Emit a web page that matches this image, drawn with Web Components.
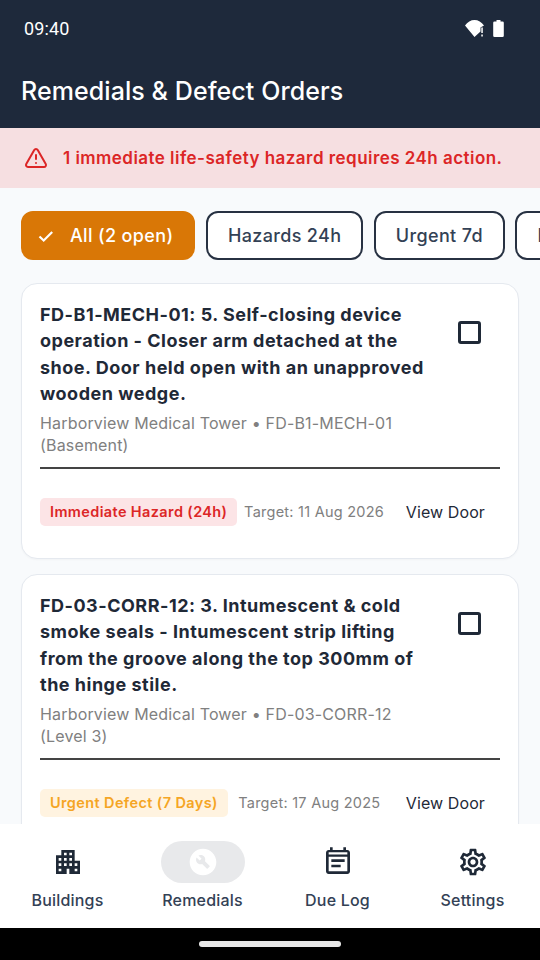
<!DOCTYPE html>
<html>
<head>
<meta charset="utf-8">
<style>
    html, body { margin: 0; height: 100%; background: #000; }
    body { font-family: Inter, "Liberation Sans", sans-serif; }
    app-shell { height: 960px; }
</style>
</head>
<body>
<app-shell>
    <status-bar slot="top" time="09:40"></status-bar>
    <app-header slot="top">Remedials &amp; Defect Orders</app-header>
    <hazard-banner slot="top">1 immediate life-safety hazard requires 24h action.</hazard-banner>

    <filter-row>
        <filter-chip selected>All (2 open)</filter-chip>
        <filter-chip>Hazards 24h</filter-chip>
        <filter-chip>Urgent 7d</filter-chip>
        <filter-chip>Routine 30d</filter-chip>
    </filter-row>

    <defect-card level="hazard" badge="Immediate Hazard (24h)" target="Target: 11 Aug 2026"
        meta="Harborview Medical Tower • FD-B1-MECH-01 (Basement)">
        FD-B1-MECH-01: 5. Self-closing device operation - Closer arm detached at the shoe. Door held open with an unapproved wooden wedge.
    </defect-card>
    <defect-card level="urgent" badge="Urgent Defect (7 Days)" target="Target: 17 Aug 2025"
        meta="Harborview Medical Tower • FD-03-CORR-12 (Level 3)">
        FD-03-CORR-12: 3. Intumescent &amp; cold smoke seals - Intumescent strip lifting from the groove along the top 300mm of the hinge stile.
    </defect-card>

    <bottom-nav slot="bottom">
        <nav-item icon="buildings">Buildings</nav-item>
        <nav-item icon="remedials" active>Remedials</nav-item>
        <nav-item icon="duelog">Due Log</nav-item>
        <nav-item icon="settings">Settings</nav-item>
    </bottom-nav>
    <home-bar slot="bottom"></home-bar>
</app-shell>

<script>
const ICONS = {
    buildings: `<svg viewBox="0 0 24 24" width="32" height="32" fill="#1f2937">
        <path d="M17 11V3H7v4H3v14h8v-4h2v4h8V11h-4zM7 19H5v-2h2v2zm0-4H5v-2h2v2zm0-4H5V9h2v2zm4 4H9v-2h2v2zm0-4H9V9h2v2zm0-4H9V5h2v2zm4 8h-2v-2h2v2zm0-4h-2V9h2v2zm0-4h-2V5h2v2zm4 12h-2v-2h2v2zm0-4h-2v-2h2v2z"/>
    </svg>`,
    remedials: `<svg viewBox="0 0 24 24" width="32" height="32" fill="#fff">
        <path fill-rule="evenodd" d="M12,2C6.48,2,2,6.48,2,12c0,5.52,4.48,10,10,10s10-4.48,10-10C22,6.48,17.52,2,12,2z M16.9,15.49l-1.4,1.4c-0.2,0.2-0.51,0.2-0.71,0l-3.41-3.41c-1.22,0.43-2.64,0.17-3.62-0.81c-1.11-1.11-1.3-2.79-0.59-4.1l2.35,2.35l1.41-1.41L8.58,7.17c1.32-0.71,2.99-0.52,4.1,0.59c0.98,0.98,1.24,2.4,0.81,3.62l3.41,3.41C17.09,14.98,17.09,15.3,16.9,15.49z"/>
    </svg>`,
    duelog: `<svg viewBox="0 0 24 24" width="32" height="32" fill="#1f2937">
        <path fill-rule="evenodd" d="M19 3h-1V1h-2v2H8V1H6v2H5c-1.110 0-1.990.9-1.990 2L3 19c0 1.100.89 2 2 2h14c1.100 0 2-.9 2-2V5c0-1.100-.9-2-2-2zm0 16H5V8h14v11zM5 4.700h14v1.600H5zM7 10h10v2H7zM7 14h7v2H7z"/>
    </svg>`,
    settings: `<svg viewBox="0 0 24 24" width="32" height="32" fill="#1f2937">
        <path d="M19.43 12.98c.04-.32.07-.64.07-.98 0-.34-.03-.66-.07-.98l2.11-1.65c.19-.15.24-.42.12-.64l-2-3.46c-.09-.16-.26-.25-.44-.25-.06 0-.12.01-.17.03l-2.49 1c-.52-.4-1.08-.73-1.69-.98l-.38-2.65C14.46 2.18 14.25 2 14 2h-4c-.25 0-.46.18-.49.42l-.38 2.65c-.61.25-1.17.59-1.69.98l-2.49-1c-.06-.02-.12-.03-.18-.03-.17 0-.34.09-.43.25l-2 3.46c-.13.22-.07.49.12.64l2.11 1.65c-.04.32-.07.65-.07.98 0 .33.03.66.07.98l-2.11 1.65c-.19.15-.24.42-.12.64l2 3.46c.09.16.26.25.44.25.06 0 .12-.01.17-.03l2.49-1c.52.4 1.08.73 1.69.98l.38 2.65c.03.24.24.42.49.42h4c.25 0 .46-.18.49-.42l.38-2.65c.61-.25 1.17-.59 1.69-.98l2.49 1c.06.02.12.03.18.03.17 0 .34-.09.43-.25l2-3.46c.12-.22.07-.49-.12-.64l-2.11-1.65zm-1.98-1.71c.04.31.05.52.05.73 0 .21-.02.43-.05.73l-.14 1.13.89.7 1.08.84-.7 1.21-1.27-.51-1.04-.42-.9.68c-.43.32-.84.56-1.25.73l-1.06.43-.16 1.13-.2 1.35h-1.4l-.19-1.35-.16-1.13-1.06-.43c-.43-.18-.83-.41-1.23-.71l-.91-.7-1.06.43-1.27.51-.7-1.21 1.08-.84.89-.7-.14-1.13c-.03-.31-.05-.54-.05-.74s.02-.43.05-.73l.14-1.13-.89-.7-1.08-.84.7-1.21 1.27.51 1.04.42.9-.68c.43-.32.84-.56 1.25-.73l1.06-.43.16-1.13.2-1.35h1.39l.19 1.35.16 1.13 1.06.43c.43.18.83.41 1.23.71l.91.7 1.06-.43 1.27-.51.7 1.21-1.07.85-.89.7.14 1.13zM12 8c-2.21 0-4 1.79-4 4s1.79 4 4 4 4-1.79 4-4-1.79-4-4-4zm0 6c-1.1 0-2-.9-2-2s.9-2 2-2 2 .9 2 2-.9 2-2 2z"/>
    </svg>`
};

class AppShell extends HTMLElement {
    constructor() {
        super();
        this.attachShadow({ mode: 'open' });
        this.shadowRoot.innerHTML = `
            <style>
                :host { display: flex; flex-direction: column; width: 540px; background: #f8fafc; overflow: hidden; }
                .content { flex: 1; min-height: 0; overflow: hidden; display: flex; flex-direction: column; gap: 15px; padding: 23px 21px 0; }
            </style>
            <slot name="top"></slot>
            <div class="content"><slot></slot></div>
            <slot name="bottom"></slot>
        `;
    }
}

class StatusBar extends HTMLElement {
    constructor() {
        super();
        this.attachShadow({ mode: 'open' });
        this.shadowRoot.innerHTML = `
            <style>
                :host { display: flex; justify-content: space-between; align-items: center; height: 56px; padding: 0 36px 0 24px; background: #1e293b; color: #fff; font-family: Roboto, sans-serif; font-size: 18px; font-weight: 450; letter-spacing: .15px; }
                .icons { display: flex; align-items: center; gap: 9px; }
                svg { display: block; }
            </style>
            <span>${this.getAttribute('time')}</span>
            <div class="icons">
                <svg width="19" height="17" viewBox="0 0 19 17" fill="#fff">
                    <path d="M0 5.500C2.400 2 5.800 0 9.500 0 13.200 0 16.600 2 19 5.500L15.500 7.500V11.500L9.500 17z"/>
                    <path d="M16.300 7.500h1.500v5.500h-1.500zM16.300 14.500h1.500v2h-1.500z"/>
                </svg>
                <svg width="11" height="17" viewBox="0 0 11 17" fill="#fff">
                    <path d="M3.500 0h4v1.500H9.500a1.300 1.300 0 0 1 1.300 1.300V15.700A1.300 1.300 0 0 1 9.500 17h-8A1.300 1.300 0 0 1 .2 15.700V2.800A1.300 1.300 0 0 1 1.500 1.500h2z"/>
                </svg>
            </div>
        `;
    }
}

class AppHeader extends HTMLElement {
    constructor() {
        super();
        this.attachShadow({ mode: 'open' });
        this.shadowRoot.innerHTML = `
            <style>
                :host { display: flex; align-items: center; height: 72px; padding: 0 21px 2px; box-sizing: border-box; background: #1e293b; color: #fff; font-size: 25px; font-weight: 500; letter-spacing: .08px; }
            </style>
            <slot></slot>
        `;
    }
}

class HazardBanner extends HTMLElement {
    constructor() {
        super();
        this.attachShadow({ mode: 'open' });
        this.shadowRoot.innerHTML = `
            <style>
                :host { display: flex; align-items: center; gap: 15px; height: 60px; padding: 0 24px; box-sizing: border-box; background: #f6dfe1; color: #dc2626; font-size: 17px; font-weight: 600; letter-spacing: .46px; }
                svg { display: block; flex: none; }
            </style>
            <svg width="24" height="24" viewBox="0 0 24 24" fill="none" stroke="#dc2626" stroke-width="2" stroke-linecap="round" stroke-linejoin="round">
                <path d="M21.730 18l-8-14a2 2 0 0 0-3.480 0l-8 14A2 2 0 0 0 4 21h16a2 2 0 0 0 1.730-3"/>
                <path d="M12 9v4"/><path d="M12 17h.01"/>
            </svg>
            <span><slot></slot></span>
        `;
    }
}

class FilterRow extends HTMLElement {
    constructor() {
        super();
        this.attachShadow({ mode: 'open' });
        this.shadowRoot.innerHTML = `
            <style>
                :host { display: flex; gap: 10.500px; margin-right: -21px; margin-bottom: 8px; overflow: hidden; flex: none; }
            </style>
            <slot></slot>
        `;
    }
}

class FilterChip extends HTMLElement {
    constructor() {
        super();
        this.attachShadow({ mode: 'open' });
        const selected = this.hasAttribute('selected');
        this.shadowRoot.innerHTML = `
            <style>
                :host { display: flex; align-items: center; flex: none; gap: 15px; height: 49px; padding: 0 20px; box-sizing: border-box; border: 2px solid #273142; border-radius: 12px; background: #fff; color: #334155; font-size: 18px; font-weight: 500; letter-spacing: .35px; }
                :host([selected]) { background: #d97706; border-color: #d97706; color: #fff; padding: 0 20px 0 14px; }
                svg { display: block; }
            </style>
            ${selected ? `<svg width="18" height="18" viewBox="0 0 18 18" fill="none" stroke="#fff" stroke-width="2.200"><path d="M2.500 9.500l4.200 4 8.500-8.500"/></svg>` : ''}
            <slot></slot>
        `;
    }
}

class DefectCard extends HTMLElement {
    constructor() {
        super();
        this.attachShadow({ mode: 'open' });
        const level = this.getAttribute('level');
        this.shadowRoot.innerHTML = `
            <style>
                :host { display: block; flex: none; background: #fff; border: 1px solid #e5e9ef; border-radius: 16px; padding: 18px 18px 32.500px; box-shadow: 0 1px 2px rgba(15,23,42,.03); }
                .head { display: flex; align-items: flex-start; gap: 22px; padding-right: 19px; }
                .main { width: 396px; flex: none; }
                .title { color: #1f2937; font-size: 18px; font-weight: 700; line-height: 26.300px; letter-spacing: .5px; }
                .check { flex: none; margin-top: 19px; width: 23px; height: 23px; box-sizing: border-box; border: 3px solid #1f2937; border-radius: 3px; }
                .meta { margin-top: 5px; color: #808080; font-size: 16px; line-height: 22px; letter-spacing: .17px; }
                .rule { margin-top: 11px; height: 2px; background: #444; }
                .foot { display: flex; align-items: center; justify-content: space-between; margin-top: 28.500px; }
                .badge { flex: none; padding: 0 10px; height: 28px; line-height: 28px; border-radius: 5px; font-size: 14.500px; font-weight: 600; letter-spacing: .38px; }
                .badge.hazard { background: #fce4e6; color: #dc2626; }
                .badge.urgent { background: #fff3e0; color: #f5a524; }
                .target { color: #808080; font-size: 14.500px; letter-spacing: .25px; white-space: nowrap; }
                .view { padding: 0 15px; color: #1f2937; font-size: 16px; font-weight: 400; letter-spacing: .1px; white-space: nowrap; }
            </style>
            <div class="head">
                <div class="main">
                    <div class="title"><slot></slot></div>
                    <div class="meta">${this.getAttribute('meta')}</div>
                </div>
                <div class="check"></div>
            </div>
            <div class="rule"></div>
            <div class="foot">
                <span class="badge ${level}">${this.getAttribute('badge')}</span>
                <span class="target">${this.getAttribute('target')}</span>
                <span class="view">View Door</span>
            </div>
        `;
    }
}

class BottomNav extends HTMLElement {
    constructor() {
        super();
        this.attachShadow({ mode: 'open' });
        this.shadowRoot.innerHTML = `
            <style>
                :host { display: grid; grid-template-columns: repeat(4, 1fr); height: 104px; background: #fff; box-sizing: border-box; padding-top: 17px; }
            </style>
            <slot></slot>
        `;
    }
}

class NavItem extends HTMLElement {
    constructor() {
        super();
        this.attachShadow({ mode: 'open' });
        this.shadowRoot.innerHTML = `
            <style>
                :host { display: flex; flex-direction: column; align-items: center; color: #334155; font-size: 16px; font-weight: 450; letter-spacing: .2px; }
                .pill { display: flex; align-items: center; justify-content: center; width: 84px; height: 42px; border-radius: 21px; }
                :host([active]) .pill { background: #e8e9eb; }
                .pill svg { display: block; }
                .label { margin-top: 6px; line-height: 22px; }
            </style>
            <div class="pill">${ICONS[this.getAttribute('icon')]}</div>
            <div class="label"><slot></slot></div>
        `;
    }
}

class HomeBar extends HTMLElement {
    constructor() {
        super();
        this.attachShadow({ mode: 'open' });
        this.shadowRoot.innerHTML = `
            <style>
                :host { display: flex; align-items: center; justify-content: center; height: 32px; background: #000; }
                div { width: 142px; height: 6px; border-radius: 3px; background: #e8e8e8; }
            </style>
            <div></div>
        `;
    }
}

customElements.define('app-shell', AppShell);
customElements.define('status-bar', StatusBar);
customElements.define('app-header', AppHeader);
customElements.define('hazard-banner', HazardBanner);
customElements.define('filter-row', FilterRow);
customElements.define('filter-chip', FilterChip);
customElements.define('defect-card', DefectCard);
customElements.define('bottom-nav', BottomNav);
customElements.define('nav-item', NavItem);
customElements.define('home-bar', HomeBar);
</script>
</body>
</html>
